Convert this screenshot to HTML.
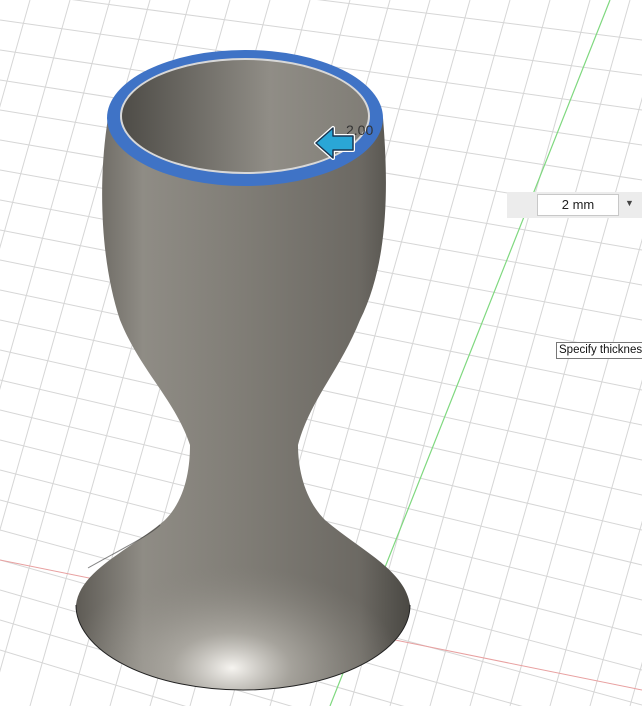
<!DOCTYPE html>
<html><head><style>
html,body{margin:0;width:642px;height:706px;overflow:hidden}
body{background:#fff;font-family:"Liberation Sans",sans-serif;position:relative}
svg{position:absolute;left:0;top:0}
.inp{position:absolute;left:507px;top:192px;width:135px;height:26px;background:#ececec}
.inp .b{position:absolute;left:30px;top:2px;width:80px;height:20px;background:#fff;border:1px solid #c8c8c8;font-size:13px;text-align:center;line-height:20px;color:#222}
.inp .a{position:absolute;left:118px;top:6px;font-size:9px;color:#444}
.tip{position:absolute;left:556px;top:342px;width:90px;overflow:hidden;border:1px solid #777;background:#fff;font-size:11.5px;padding:0 2px;height:15px;line-height:15px;white-space:nowrap;color:#111}
</style></head><body>
<svg width="642" height="706" viewBox="0 0 642 706">
<defs>
<linearGradient id="body" gradientUnits="userSpaceOnUse" x1="76" x2="410" y1="0" y2="0">
<stop offset="0" stop-color="#5e5b55"/><stop offset="0.2" stop-color="#8f8c85"/><stop offset="0.5" stop-color="#807d76"/><stop offset="0.85" stop-color="#6c6963"/><stop offset="1" stop-color="#4a4843"/>
</linearGradient>
<radialGradient id="base" gradientUnits="userSpaceOnUse" cx="232" cy="668" r="170" gradientTransform="translate(232 668) scale(1 0.6) translate(-232 -668)">
<stop offset="0" stop-color="#f6f4f0" stop-opacity="1"/><stop offset="0.35" stop-color="#b0ada6" stop-opacity="0.8"/><stop offset="1" stop-color="#8a8780" stop-opacity="0"/>
</radialGradient>
<linearGradient id="inner" x1="0" x2="1"><stop offset="0" stop-color="#4e4c47"/><stop offset="0.6" stop-color="#908d86"/><stop offset="1" stop-color="#807d76"/></linearGradient>
</defs>
<g stroke="#d6d6d6" stroke-width="1">
<line x1="0" y1="-40" x2="642" y2="40"/><line x1="0" y1="-10" x2="642" y2="75"/><line x1="0" y1="20" x2="642" y2="110"/><line x1="0" y1="50" x2="642" y2="145"/><line x1="0" y1="80" x2="642" y2="180"/><line x1="0" y1="110" x2="642" y2="215"/><line x1="0" y1="140" x2="642" y2="250"/><line x1="0" y1="170" x2="642" y2="285"/><line x1="0" y1="200" x2="642" y2="320"/><line x1="0" y1="230" x2="642" y2="355"/><line x1="0" y1="260" x2="642" y2="390"/><line x1="0" y1="290" x2="642" y2="425"/><line x1="0" y1="320" x2="642" y2="460"/><line x1="0" y1="350" x2="642" y2="495"/><line x1="0" y1="380" x2="642" y2="530"/><line x1="0" y1="410" x2="642" y2="565"/><line x1="0" y1="440" x2="642" y2="600"/><line x1="0" y1="470" x2="642" y2="635"/><line x1="0" y1="500" x2="642" y2="670"/><line x1="0" y1="530" x2="642" y2="705"/><line x1="0" y1="560" x2="642" y2="740"/><line x1="0" y1="590" x2="642" y2="775"/><line x1="0" y1="620" x2="642" y2="810"/><line x1="0" y1="650" x2="642" y2="845"/>
<line x1="30" y1="0" x2="-170" y2="706"/><line x1="70" y1="0" x2="-130" y2="706"/><line x1="110" y1="0" x2="-90" y2="706"/><line x1="150" y1="0" x2="-50" y2="706"/><line x1="190" y1="0" x2="-10" y2="706"/><line x1="230" y1="0" x2="30" y2="706"/><line x1="270" y1="0" x2="70" y2="706"/><line x1="310" y1="0" x2="110" y2="706"/><line x1="350" y1="0" x2="150" y2="706"/><line x1="390" y1="0" x2="190" y2="706"/><line x1="430" y1="0" x2="230" y2="706"/><line x1="470" y1="0" x2="270" y2="706"/><line x1="510" y1="0" x2="310" y2="706"/><line x1="550" y1="0" x2="350" y2="706"/><line x1="590" y1="0" x2="390" y2="706"/><line x1="630" y1="0" x2="430" y2="706"/><line x1="670" y1="0" x2="470" y2="706"/><line x1="710" y1="0" x2="510" y2="706"/><line x1="750" y1="0" x2="550" y2="706"/><line x1="790" y1="0" x2="590" y2="706"/><line x1="830" y1="0" x2="630" y2="706"/>
</g>
<line x1="610" y1="0" x2="330" y2="706" stroke="#7fd87f" stroke-width="1.2"/>
<line x1="0" y1="560" x2="642" y2="690" stroke="#e8a0a0" stroke-width="1"/>
<!-- whole goblet body -->
<path d="M108,118 C98,180 100,260 120,320 C140,370 175,400 190,445 C190,470 185,500 165,520 C130,550 80,570 76,605 A167,85 0 0 0 410,605 C405,570 360,550 325,520 C305,500 298,470 298,445 C310,400 340,370 360,320 C390,260 388,180 383,118 Z" fill="url(#body)"/>
<path d="M76,605 C80,570 130,550 165,520 C185,500 190,470 190,445 L298,445 C298,470 305,500 325,520 C360,550 405,570 410,605 A167,85 0 0 1 76,605 Z" fill="url(#base)"/>
<path d="M76,605 A167,85 0 0 0 410,605" fill="none" stroke="#222" stroke-width="1"/>
<path d="M88,568 C120,550 150,535 160,525" fill="none" stroke="#333" stroke-width="1" opacity="0.6"/>
<ellipse cx="245" cy="118" rx="138" ry="68" fill="#3f73c6"/>
<ellipse cx="245" cy="116" rx="125" ry="58" fill="#d8d8d8"/>
<ellipse cx="245" cy="116" rx="123" ry="56" fill="url(#inner)"/>
<text x="346" y="135" font-size="14" fill="#333" font-family="Liberation Sans">2.00</text>
<path d="M316,143 L333,128 L333,136 L353,136 L353,150 L333,150 L333,158 Z" fill="#2aa6d6" stroke="#fff" stroke-width="4" stroke-linejoin="round"/>
<path d="M316,143 L333,128 L333,136 L353,136 L353,150 L333,150 L333,158 Z" fill="#2aa6d6" stroke="#1a3550" stroke-width="1.5" stroke-linejoin="round"/>
</svg>
<div class="inp"><div class="b">2 mm</div><div class="a">▼</div></div>
<div class="tip">Specify thickness</div>
</body></html>
